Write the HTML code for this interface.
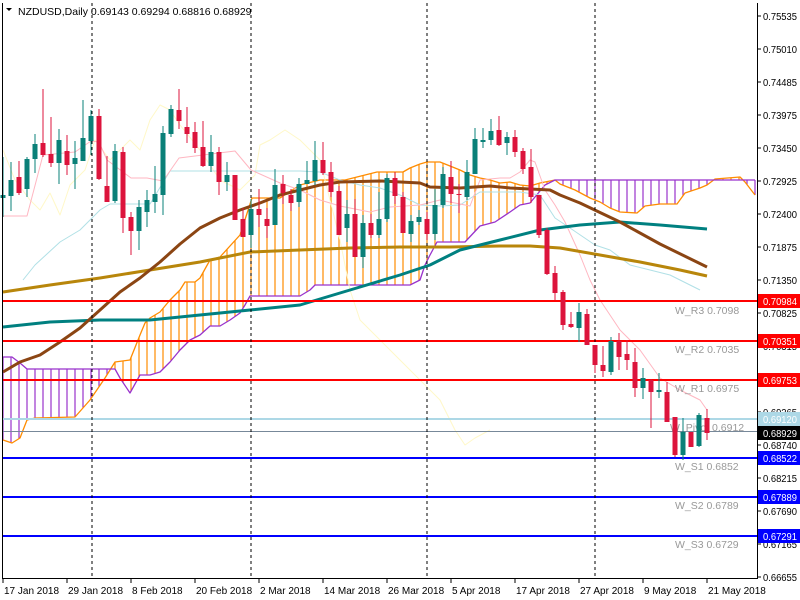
<!DOCTYPE html>
<html><head><meta charset="utf-8">
<style>
html,body{margin:0;padding:0;background:#fff;}
svg{display:block;font-family:"Liberation Sans",sans-serif;}
</style></head>
<body>
<svg id="c" width="800" height="600" xmlns="http://www.w3.org/2000/svg">
<rect width="800" height="600" fill="#fff"/>
<g id="hatch"></g>
<g id="lines"></g>
<g id="levels"></g>
<g id="candles"></g>
<g id="frame"></g>
<g id="axis"></g>
</svg>
<script>
var NS="http://www.w3.org/2000/svg";
function el(p,t,a,txt){var e=document.createElementNS(NS,t);for(var k in a)e.setAttribute(k,a[k]);if(txt!==undefined)e.textContent=txt;document.getElementById(p).appendChild(e);return e;}
function pl(p,pts,col,w){el(p,"polyline",{points:pts.map(function(q){return q.join(",")}).join(" "),fill:"none",stroke:col,"stroke-width":w,"stroke-linejoin":"round"});}
function interp(pts,x){for(var i=0;i<pts.length-1;i++){if(x>=pts[i][0]&&x<=pts[i+1][0]){var t=(x-pts[i][0])/((pts[i+1][0]-pts[i][0])||1);return pts[i][1]+t*(pts[i+1][1]-pts[i][1]);}}return null;}

var orange=[[3,440],[12,443],[20,438],[27,420],[35,418],[75,417],[90,400],[105,378],[115,362],[130,360],[140,335],[145,323],[150,318],[160,312],[170,300],[180,290],[185,282],[195,282],[200,278],[210,260],[220,257],[240,235],[252,198],[280,198],[300,185],[320,180],[345,180],[377,172],[403,172],[410,168],[420,164],[427,162],[440,162],[450,166],[460,170],[470,175],[480,178],[490,180],[500,183],[510,182],[520,185],[530,186],[540,183],[555,180],[560,184],[575,190],[590,198],[600,202],[610,208],[620,212],[637,213],[645,206],[660,204],[677,204],[685,193],[700,188],[707,185],[715,179],[740,177],[745,182],[755,195]];
var purple=[[3,357],[12,357],[20,363],[27,369],[115,369],[120,378],[130,393],[140,375],[150,375],[160,372],[170,362],[180,350],[190,340],[200,335],[210,326],[220,326],[230,320],[240,313],[245,305],[250,296],[300,296],[310,290],[315,285],[410,285],[420,280],[425,265],[430,255],[437,242],[465,242],[480,226],[495,222],[510,212],[520,205],[530,203],[545,185],[555,180],[755,180]];
for(var x=3;x<=755;x+=8){var a=interp(orange,x),b=interp(purple,x);if(a==null||b==null)continue;el("hatch","line",{x1:x,y1:a,x2:x,y2:b,stroke:(a<b?"#ff8c00":"#9932cc"),"stroke-width":1.2});}
pl("hatch",orange,"#ff8c00",1.3);
pl("hatch",purple,"#9932cc",1.3);

pl("lines",[[3,150],[15,180],[30,200],[40,210],[50,193],[60,215],[70,185],[85,170],[95,140],[110,160],[130,140],[140,150],[150,120],[160,105],[170,110],[180,125],[200,150],[220,180],[240,190],[255,175],[260,145],[270,140],[285,130],[300,140],[310,150],[320,160],[330,200],[340,240],[350,290],[360,320],[370,330],[380,340],[400,360],[420,380],[440,400],[455,430],[465,445],[475,438],[490,430]],"#fff8c8",1);
pl("lines",[[23,280],[35,265],[60,242],[80,230],[100,210],[110,204],[150,204],[170,171],[300,171],[320,172],[340,180],[360,185],[380,188],[400,195],[420,205],[440,206],[460,205],[480,192],[520,192],[540,195],[555,218],[570,228],[595,245],[610,250],[630,265],[650,270],[670,275],[700,290]],"#b0e0e6",1);
pl("lines",[[3,216],[27,216],[43,155],[75,152],[91,141],[99,142],[107,160],[131,178],[147,178],[163,181],[179,158],[235,151],[251,170],[280,183],[300,190],[320,200],[340,206],[370,212],[390,207],[420,205],[440,200],[470,206],[480,180],[500,178],[510,178],[520,172],[530,160],[535,162],[545,190],[555,205],[565,222],[580,255],[590,280],[600,300],[620,330],[640,350],[660,378],[680,390],[700,400],[707,410]],"#ffb6c1",1);
pl("lines",[[3,292],[50,285],[100,278],[150,270],[200,262],[250,252],[300,250],[350,248],[400,247],[450,247],[500,246],[530,246],[560,248],[600,255],[640,262],[680,270],[707,276]],"#b8860b",3);
pl("lines",[[3,327],[50,322],[100,320],[150,320],[200,315],[250,310],[300,305],[350,290],[400,275],[430,265],[460,250],[500,240],[540,230],[580,225],[620,222],[660,225],[707,229]],"#008080",3);
pl("lines",[[3,372],[20,362],[40,355],[60,342],[80,328],[100,310],[120,292],[140,278],[160,262],[180,244],[200,228],[220,218],[240,210],[260,203],[280,195],[300,190],[320,185],[340,182],[380,181],[420,183],[430,187],[460,188],[490,186],[510,188],[550,190],[560,195],[580,203],[620,222],[660,244],[707,267]],"#8b4513",3);

var lv=[[301,"#ff0000",2,"W_R3 0.7098",310],[341,"#ff0000",2,"W_R2 0.7035",349],[380,"#ff0000",2,"W_R1 0.6975",388],[419,"#add8e6",2,"W_Pivot 0.6912",427],[458,"#0000ff",2,"W_S1 0.6852",466],[497,"#0000ff",2,"W_S2 0.6789",505],[536,"#0000ff",2,"W_S3 0.6729",544]];
lv.forEach(function(l){el("levels","line",{x1:3,y1:l[0],x2:757,y2:l[0],stroke:l[1],"stroke-width":l[2]});});
el("levels","line",{x1:3,y1:431.5,x2:757,y2:431.5,stroke:"#778899","stroke-width":1});
lv.forEach(function(l){el("levels","text",{x:(l[3].indexOf("Pivot")>0?670:675),y:l[4]+4,"font-size":"10.5",fill:"#999"},l[3]);});
[92,251,427,595].forEach(function(x){el("levels","line",{x1:x,y1:3,x2:x,y2:578,stroke:"#000","stroke-width":1,"stroke-dasharray":"3,3"});});

var C=[[1,195,198,157,217],[1,180,196,162,211],[0,177,193,161,195],[1,159,189,157,197],[1,144,159,134,173],[0,143,155,89,157],[0,154,163,117,167],[1,140,163,129,184],[0,151,165,135,175],[1,158,164,141,189],[1,138,161,100,161],[1,116,141,110,155],[0,116,179,109,180],[0,186,202,156,202],[1,151,201,144,203],[0,152,218,147,233],[0,217,231,212,255],[1,207,231,200,250],[1,200,212,190,227],[1,194,202,166,213],[1,133,195,126,215],[1,109,134,105,137],[0,110,121,89,129],[0,127,134,107,143],[0,132,148,122,153],[0,147,166,121,167],[1,152,166,135,172],[0,152,182,147,195],[1,175,182,162,191],[0,175,220,175,220],[0,219,237,208,237],[1,209,235,199,248],[0,209,215,189,227],[0,219,226,208,238],[1,185,225,169,225],[0,184,193,175,204],[0,195,203,189,211],[1,184,202,178,207],[1,180,184,161,184],[1,160,181,141,185],[0,160,173,142,175],[0,172,192,162,197],[0,191,235,186,235],[1,214,228,200,242],[0,214,257,199,257],[1,223,257,215,268],[0,223,235,214,238],[1,219,235,192,238],[1,178,219,174,222],[0,178,196,172,204],[0,197,233,192,233],[1,221,234,215,242],[1,217,222,210,225],[0,219,234,212,240],[1,205,234,189,240],[1,174,205,167,208],[0,177,194,161,203],[0,194,195,184,213],[1,172,197,160,200],[1,139,174,128,174],[1,140,142,128,148],[1,131,140,119,145],[0,130,145,116,146],[1,137,143,132,155],[0,137,152,130,157],[0,151,169,148,174],[0,167,197,149,203],[0,195,235,195,238],[0,230,274,228,275],[0,273,293,266,300],[0,292,325,290,330],[0,324,327,312,328],[1,312,328,303,342],[0,314,345,309,345],[0,345,365,345,373],[0,365,371,346,377],[1,341,372,337,375],[0,341,357,333,370],[0,354,360,340,370],[0,362,388,348,397],[1,378,388,368,399],[0,380,392,379,428],[1,390,392,373,398],[0,392,422,382,422],[0,417,455,417,457],[1,432,455,418,460],[0,432,447,432,447],[1,415,446,413,447],[0,418,433,409,440]];
C.forEach(function(c,i){var x=3+8*i,col=c[0]?"#0a8078":"#dc143c";
el("candles","line",{x1:x,y1:c[3],x2:x,y2:c[4],stroke:col,"stroke-width":1});
el("candles","rect",{x:x-2.5,y:c[1],width:5,height:Math.max(1,c[2]-c[1]),fill:col});});

el("frame","line",{x1:2.5,y1:3,x2:2.5,y2:579,stroke:"#000","stroke-width":1});
el("frame","line",{x1:757.5,y1:3,x2:757.5,y2:579,stroke:"#000","stroke-width":1});
el("frame","line",{x1:2,y1:578.5,x2:758,y2:578.5,stroke:"#000","stroke-width":1});

el("axis","polygon",{points:"6,8 12,8 9,11",fill:"#000"});
el("axis","text",{x:18,y:15,"font-size":"10.5",fill:"#000"},"NZDUSD,Daily  0.69143 0.69294 0.68816 0.68929");

var ylab=["0.75535","0.75010","0.74485","0.73975","0.73450","0.72925","0.72400","0.71875","0.71350","0.70825","0.70315","0.69790","0.69265","0.68740","0.68215","0.67690","0.67165","0.66655"];
ylab.forEach(function(t,k){var y=16+33*k;el("axis","line",{x1:757,y1:y,x2:761,y2:y,stroke:"#000"});el("axis","text",{x:763,y:y+4,"font-size":"10","textLength":"34","lengthAdjust":"spacingAndGlyphs",fill:"#000"},t);});
var box=[[301,"#ff0000","#fff","0.70984"],[341,"#ff0000","#fff","0.70351"],[380,"#ff0000","#fff","0.69753"],[419,"#add8e6","#fff","0.69120"],[433,"#000","#fff","0.68929"],[458,"#0000ff","#fff","0.68522"],[497,"#0000ff","#fff","0.67889"],[536,"#0000ff","#fff","0.67291"]];
box.forEach(function(b){el("axis","rect",{x:758,y:b[0]-7,width:42,height:14,fill:b[1]});el("axis","text",{x:763,y:b[0]+4,"font-size":"10","textLength":"34","lengthAdjust":"spacingAndGlyphs",fill:b[2]},b[3]);});

var xl=["17 Jan 2018","29 Jan 2018","8 Feb 2018","20 Feb 2018","2 Mar 2018","14 Mar 2018","26 Mar 2018","5 Apr 2018","17 Apr 2018","27 Apr 2018","9 May 2018","21 May 2018"];
xl.forEach(function(t,k){var x=3+64*k;el("axis","line",{x1:x,y1:579,x2:x,y2:583,stroke:"#000"});el("axis","text",{x:x+1,y:594,"font-size":"10",fill:"#000"},t);});
</script>
</body></html>
